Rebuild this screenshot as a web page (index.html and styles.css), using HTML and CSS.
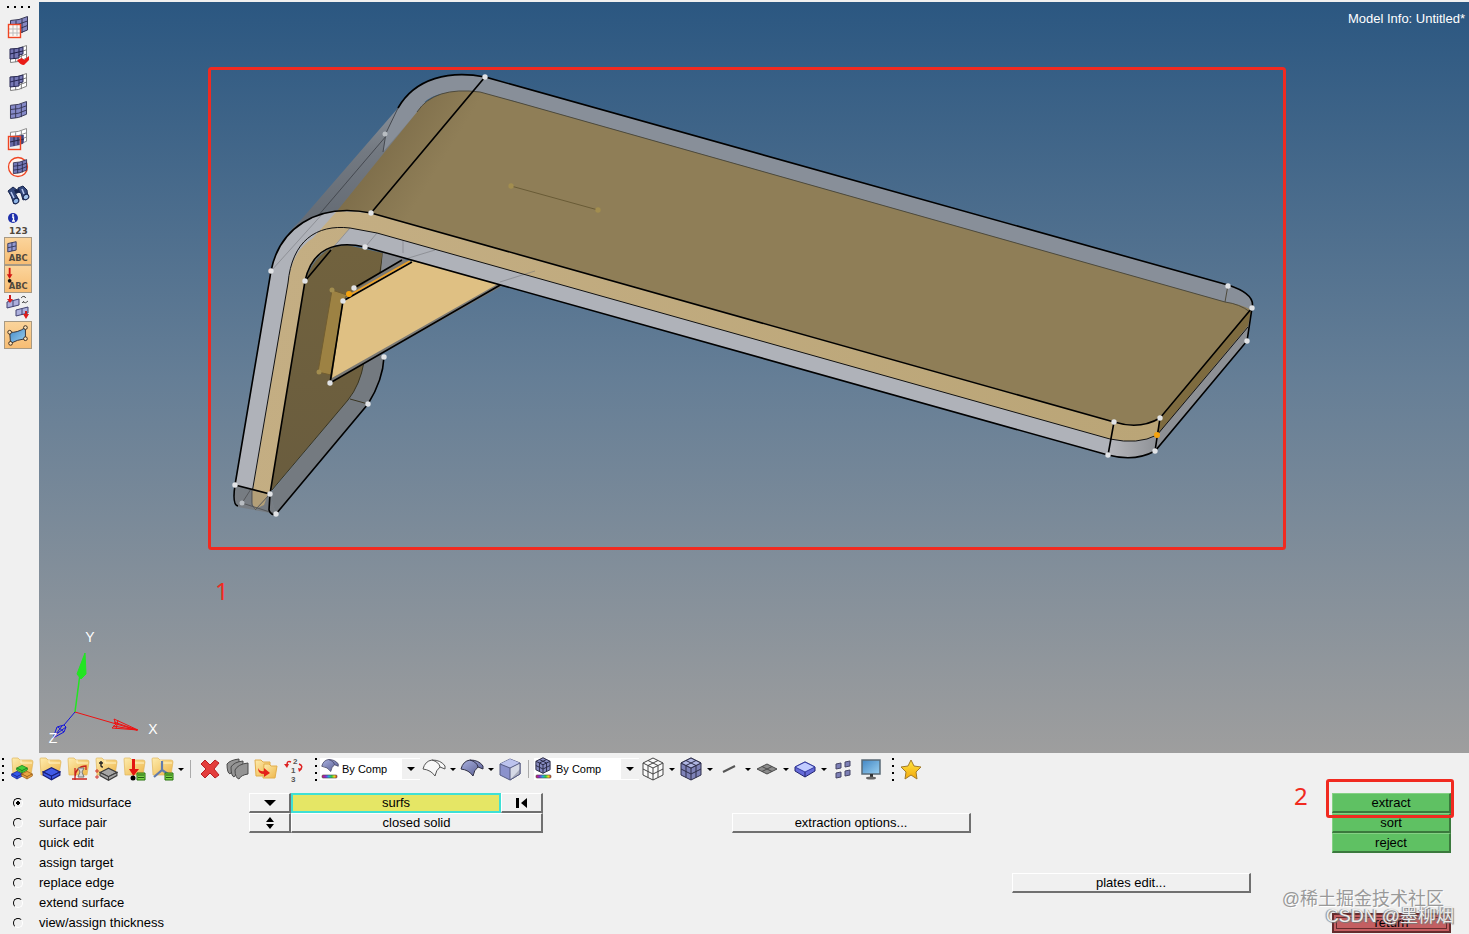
FILE: index.html
```html
<!DOCTYPE html>
<html lang="en">
<head>
<meta charset="utf-8">
<title>Model Info: Untitled*</title>
<link rel="stylesheet" href="styles.css">
</head>
<body>
<svg class="defs" aria-hidden="true">
  <defs>
    <linearGradient id="fold" x1="0" y1="0" x2="1" y2="1"><stop offset="0" stop-color="#fdecae"/><stop offset="1" stop-color="#eeb548"/></linearGradient>
    <linearGradient id="sheen" x1="0" y1="0" x2="1" y2="1"><stop offset="0" stop-color="#aab2e0"/><stop offset="1" stop-color="#55598f"/></linearGradient>
    <linearGradient id="screen" x1="0" y1="0" x2="1" y2="1"><stop offset="0" stop-color="#4287c4"/><stop offset="1" stop-color="#9bd0f0"/></linearGradient>
    <linearGradient id="gold" x1="0" y1="0" x2="0" y2="1"><stop offset="0" stop-color="#ffe640"/><stop offset="1" stop-color="#f3a80c"/></linearGradient>
    <linearGradient id="spectrum"><stop offset="0" stop-color="#d02060"/><stop offset=".25" stop-color="#8030e0"/><stop offset=".45" stop-color="#20b0e0"/><stop offset=".65" stop-color="#30d040"/><stop offset=".82" stop-color="#f0e020"/><stop offset="1" stop-color="#e03020"/></linearGradient>
    <symbol id="mesh" viewBox="0 0 18 20" overflow="visible"><path d="M.5 4.500Q9 4.500 17.500.5V14Q9 18.500.5 18.500Z"/><path fill="none" d="M6 4.500V18M12 3V17M.5 9Q9 9 17.500 5M.5 14Q9 14 17.500 9.500"/></symbol>
    <symbol id="folder" viewBox="0 0 28 28"><path d="M4 4Q4 3 5 3H10L12 5H23Q25 5 25 7L23 20H5Z" fill="url(#fold)" stroke="#dfb65c" stroke-width=".7"/><path d="M13 5V8H24" fill="none" stroke="#fff3c6"/></symbol>
    <symbol id="block" viewBox="0 0 18 13"><path d="M1 5L9 1L17 5L9 9Z"/><path d="M1 5V8L9 12.500L17 8V5L9 9ZM9 9V12.500"/></symbol>
    <symbol id="cube" viewBox="0 0 24 24"><path d="M2 6L12 1L22 6V18L12 23L2 18Z"/><path fill="none" d="M2 6L12 11L22 6M12 11V23"/></symbol>
    <symbol id="cubelines" viewBox="0 0 24 24"><path fill="none" d="M7 3.500L17 8.500V20.500M17 3.500L7 8.500V20.500M2 12L12 17L22 12"/></symbol>
    <symbol id="shell" viewBox="0 0 24 18"><path d="M1 10Q3 2 10 1Q19 1 23 7V10L18 8Q14 11 13 17Q9 11 1 10Z"/><path fill="none" d="M10 1Q17 3 18 8"/></symbol>
    <symbol id="drop" viewBox="0 0 10 28"><path d="M2 13H8L5 16Z"/></symbol>
  </defs>
</svg>
<div class="app">
  <main class="workspace">
    <nav class="sidebar" aria-label="Display tools">
      <span class="dots dots-row"></span>
      <button class="tool" aria-label="Mask"><svg viewBox="0 0 28 28"><use href="#mesh" x="6" y="3" width="18" height="20" fill="#8586c0" stroke="#343452"/><rect x="5" y="12" width="11" height="12" fill="#fff8f2"/><path d="M9 12V23M13 12V23M5 16H16M5 20H16" stroke="#bbb"/><rect x="4.500" y="11.500" width="12" height="13" fill="none" stroke="#ef4523" stroke-width="1.400"/></svg></button>
      <button class="tool" aria-label="Reverse"><svg viewBox="0 0 28 28"><use href="#mesh" x="6" y="4" width="17" height="19" fill="#fff" stroke="#777"/><path d="M6 8Q14 8 19 6V13L15 14V17L6 18Z" fill="#7474b2" stroke="#292955"/><path d="M10 8V18M15 7V15M6 13L19 10" stroke="#20204a"/><path d="M13 19L18 17L20 19L25 15V19L20 24Q16 24 13 19Z" fill="#e91c17"/></svg></button>
      <button class="tool" aria-label="Unmask adjacent"><svg viewBox="0 0 28 28"><use href="#mesh" x="6" y="4" width="17" height="19" fill="#fff" stroke="#777"/><path d="M6 8Q14 8 19 6V13L15 14V17L6 18Z" fill="#7779b6" stroke="#292955"/><path d="M10 8V18M15 7V15M6 13L19 10" stroke="#272752"/></svg></button>
      <button class="tool" aria-label="Unmask all"><svg viewBox="0 0 28 28"><use href="#mesh" x="6" y="4" width="17" height="19" fill="#8589c8" stroke="#363654"/></svg></button>
      <button class="tool" aria-label="Unmask shown"><svg viewBox="0 0 28 28"><use href="#mesh" x="6" y="3" width="17" height="19" fill="#fff" stroke="#888"/><path d="M6 12L16 10L20 10V18L16 20L6 22Z" fill="#6568a5"/><path d="M10 12V21M14 11V20M18 10V19M6 17L20 14" stroke="#242445"/><rect x="4.500" y="11.500" width="12" height="13" fill="none" stroke="#ef4523" stroke-width="1.400"/></svg></button>
      <button class="tool" aria-label="Spherical clipping"><svg viewBox="0 0 28 28"><circle cx="14" cy="14" r="9.500" fill="#fff4ee" stroke="#ef4523" stroke-width="1.300"/><use href="#mesh" x="9" y="6" width="14" height="16" fill="#7378b7" stroke="#242445"/></svg></button>
      <button class="tool" aria-label="Find"><svg viewBox="0 0 28 28"><path d="M4 10L9 6L13 9L11 12L15 19L10 23L7 15ZM14 7L19 5L23 9L24 17L19 19L17 12L14 11Z" fill="#34487c" stroke="#17244d"/><path d="M10 9L15 8L16 11L12 13Z" fill="#17244d"/><ellipse cx="12" cy="20" rx="3" ry="2.500" transform="rotate(-40 12 20)" fill="#8fb6e7" stroke="#17244d"/><ellipse cx="22" cy="16" rx="3" ry="2.500" transform="rotate(-40 22 16)" fill="#a4c4ed" stroke="#17244d"/><path d="M7 11L10 17M18 8L20 13" stroke="#b9c9f0" stroke-width="1.500"/></svg></button>
      <button class="tool" aria-label="Numbers 123"><svg viewBox="0 0 28 28"><circle cx="9" cy="9" r="5" fill="#1e2fab"/><path d="M8 8H9.500V12M8 12H11" fill="none" stroke="#fff" stroke-width="1.400"/><circle cx="9" cy="6" r="1" fill="#fff"/><text x="5" y="25" class="glyph">123</text></svg></button>
      <button class="tool active" aria-label="Element labels"><svg viewBox="0 0 28 28"><path d="M3 6L12 4V13L3 15ZM7.500 5V14M3 10.500L12 8.500" fill="#9299d2" stroke="#34385c"/><text x="4" y="25" class="glyph">ABC</text></svg></button>
      <button class="tool active" aria-label="Load labels"><svg viewBox="0 0 28 28"><path d="M5 2V11" stroke="#d31612" stroke-width="2"/><path d="M2 9H8L5 14Z" fill="#d31612"/><circle cx="5" cy="16" r="2" fill="#111"/><text x="4" y="25" class="glyph">ABC</text></svg></button>
      <button class="tool" aria-label="Load handles"><svg viewBox="0 0 28 28"><path d="M3 9L15 6V12L3 15ZM9 8V14M12 17L24 14V20L12 23ZM18 16V22" fill="#adb0dd" stroke="#434371"/><path d="M6 2V7M22 18V23" stroke="#cd1b1b" stroke-width="2"/><path d="M3 6H9L6 10ZM19 21H25L22 26Z" fill="#df1c1c"/><path d="M17 5Q19 2 21 4M20 3L22 5M24 8Q22 11 19 9M20 8L18 10" fill="none" stroke="#555"/></svg></button>
      <button class="tool active" aria-label="Shape handles"><svg viewBox="0 0 28 28"><path d="M5 11Q13 12 22 6V18Q13 19 6 23Z" fill="url(#screen)" stroke="#2d2b35"/><g fill="#ffe5bb" stroke="#34251a"><circle cx="5" cy="11" r="2"/><circle cx="22" cy="6" r="2"/><circle cx="22" cy="18" r="2"/><circle cx="6" cy="23" r="2"/></g></svg></button>
    </nav>
    <section class="viewport" aria-label="Model view">
      <svg class="scene" viewBox="39 2 1430 751" preserveAspectRatio="xMinYMin meet">
        <defs>
          <linearGradient id="wall" gradientUnits="userSpaceOnUse" x1="0" y1="100" x2="0" y2="270"><stop offset="0" stop-color="#8c939d"/><stop offset=".3" stop-color="#737981"/><stop offset=".7" stop-color="#656c75"/><stop offset="1" stop-color="#8f98a5"/></linearGradient>
          <linearGradient id="plate" gradientUnits="userSpaceOnUse" x1="360" y1="150" x2="425" y2="190"><stop offset="0" stop-color="#7b6b48"/><stop offset="1" stop-color="#8f7e57"/></linearGradient>
          <linearGradient id="edge" gradientUnits="userSpaceOnUse" x1="300" y1="210" x2="1150" y2="450"><stop offset="0" stop-color="#c4ae83"/><stop offset="1" stop-color="#baa577"/></linearGradient>
          <linearGradient id="leg" gradientUnits="userSpaceOnUse" x1="0" y1="250" x2="0" y2="510"><stop offset="0" stop-color="#71623e"/><stop offset="1" stop-color="#695c3e"/></linearGradient>
          <linearGradient id="trim" gradientUnits="userSpaceOnUse" x1="1110" y1="0" x2="1158" y2="0"><stop offset="0" stop-color="#b5b6bb"/><stop offset="1" stop-color="#8e9196"/></linearGradient>
        </defs>
        <!-- far walls -->
        <path fill="url(#wall)" d="M271 271Q278 240 300 221L398 108L480 90V112L340 230Z"/>
        <path fill="#888f99" d="M386 133L398 108C415 78 450 70 485 77L1228 285Q1256 294 1253 308L1250 312L1225 302L520 103Q433 77 417 112L383 152Z"/>
        <path fill="#747a80" d="M270 494L348 400Q363 378 363 345L384 357Q383 380 368 404L276 514Z"/>
        <path class="thin" stroke="#454950" d="M387 135L271 271M386 133L383 152M398 108L386 133"/>
        <!-- inner leg and rib -->
        <path fill="url(#leg)" d="M305 281Q318 245 347 245L383 253L380 300L364 358Q363 380 348 400L270 492Z"/>
        <path class="thin" stroke="#393420" d="M364 362Q360 385 348 400L272 490M383 253L380 272M350 399L368 404"/>
        <path fill="#858990" d="M383 250L407 258L381 272Z"/>
        <path fill="#7b7a76" d="M349 294L402 259L420 264L343 301ZM332 378L500 281L504 285L330 383Z"/>
        <path fill="#dfc083" d="M343 301L412 261L503 281L332 378Z"/>
        <path fill="#9d8243" stroke="#725e31" d="M332 290L347 295L343 301L331 375L318 372Z"/>
        <path class="line" d="M305 281L331 250M354 288L402 260M343 301L412 262M343 301L330 383L502 284"/>
        <path stroke="#efa225" fill="none" stroke-width="1.500" d="M348 296L410 261"/>
        <!-- bent mid surface -->
        <path fill="url(#plate)" d="M337 211L417 112Q434 86 480 92L520 103L1225 302Q1240 304 1252 310L1160 418Q1140 430 1114 422L371 213Z"/>
        <path class="thin" stroke="#4e4a3c" d="M417 112Q434 86 480 92L520 103L1225 302Q1240 304 1250 312M1228 285L1225 302"/>
        <!-- front edge -->
        <path fill="#afb2b9" d="M235 485L271 271C279 230 310 211 347 211L371 213L1114 422Q1140 430 1160 418L1155 451Q1135 462 1108 455L365 247C335 240 312 249 305 281L270 494Z"/>
        <path fill="url(#edge)" d="M337 211L371 213L1114 422Q1140 430 1160 418L1157 435Q1138 445 1110 439L377 233L350 228L333 247Q312 255 305 281L270 494L253 490L288 283C291 260 299 247 313 238Z"/>
        <path fill="url(#trim)" d="M1113 439Q1138 445 1157 435L1155 451Q1135 462 1109 455Z"/>
        <path class="thin" stroke="#74767b" opacity=".55" d="M271 271L325 211M350 228L331 250M377 233L366 246M403 240V253M402 260L435 250M500 282L535 271"/>
        <!-- right end -->
        <path fill="#8d9095" d="M1252 308L1247 341L1155 451L1158 430Z"/>
        <path fill="#7e6b3f" d="M1252 308L1248 326L1157 435L1160 418Z"/>
        <path class="thin" d="M252 503V493L288 283C292 241 316 224 350 228L377 233L1110 439Q1138 445 1157 435L1248 327"/>
        <!-- foot -->
        <path fill="#777a7e" opacity=".85" d="M235 485L270 494L276 514L238 507Q233 502 235 485Z"/>
        <path fill="#b39f78" d="M252 490L268 494L264 505L255 509L252 503Z"/>
        <path class="thin" stroke="#55575a" d="M242 503L276 514M251 489L242 503M270 494L256 509M252 490V505L256 510"/>
        <path class="line" d="M235 485Q232 505 238 506M270 494L269 510Q271 516 276 514M235 485L270 494L305 281C312 249 335 240 365 247L1108 455Q1135 462 1155 451L1247 341L1252 308L1160 418Q1140 430 1114 422L371 213C315 202 279 230 271 271L235 485M371 213L485 77L1228 285Q1256 294 1252 308M485 77C450 70 415 78 398 108M1114 422L1108 455M1160 418L1155 451M276 514L368 404Q383 380 384 357"/>
        <path class="thin" stroke="#695b36" d="M511 186L598 210"/>
        <g fill="#a28d4f"><circle cx="511" cy="186" r="2.700"/><circle cx="598" cy="210" r="2.700"/><circle cx="332" cy="290" r="2.500"/><circle cx="319" cy="372" r="2.500"/></g>
        <g fill="#f4a20e"><circle cx="349" cy="294" r="3"/><circle cx="1157" cy="435" r="3"/></g>
        <g fill="#e1e3e6"><circle cx="485" cy="77" r="2.700"/><circle cx="385" cy="134" r="2.500" fill="#b8bdc2"/><circle cx="371" cy="213" r="2.700"/><circle cx="271" cy="271" r="2.700"/><circle cx="305" cy="281" r="2.700"/><circle cx="365" cy="247" r="2.700"/><circle cx="354" cy="288" r="2.700"/><circle cx="343" cy="301" r="2.700"/><circle cx="330" cy="383" r="2.700"/><circle cx="384" cy="357" r="2.700"/><circle cx="368" cy="404" r="2.700"/><circle cx="235" cy="485" r="2.700"/><circle cx="270" cy="494" r="2.700"/><circle cx="242" cy="503" r="2.500" fill="#b8bdc2"/><circle cx="276" cy="514" r="2.700"/><circle cx="1228" cy="286" r="2.700"/><circle cx="1252" cy="308" r="2.700"/><circle cx="1247" cy="341" r="2.700"/><circle cx="1160" cy="418" r="2.700"/><circle cx="1114" cy="422" r="2.700"/><circle cx="1108" cy="455" r="2.700"/><circle cx="1155" cy="451" r="2.700"/></g>
        <!-- axes -->
        <path stroke="#22e522" stroke-width="1.500" d="M75 712L80 674"/>
        <path stroke="#22e522" fill="#22e522" d="M85 653L77 674L81 679L86 674Z"/>
        <path stroke="#f01010" fill="none" d="M75 712L137 730M138 730L114 719L116 724L112 728ZM114 722L137 730M113 726L137 730M118 720L116 729"/>
        <path stroke="#1414d8" fill="none" d="M75 712L64 725M64 725L57 727L53 738L64 732L66 727ZM53 738L62 726M58 727L64 732M55 735L66 727"/>
        <g class="axis"><text x="90" y="642">Y</text><text x="153" y="734">X</text><text x="53" y="743">Z</text></g>
        <!-- callout -->
        <rect class="callout" x="209.500" y="68.500" width="1075" height="480" rx="2"/>
        <text class="callout-number" x="215" y="600">1</text>
      </svg>
      <p class="model-info">Model Info: Untitled*</p>
    </section>
  </main>

  <div class="toolbar" role="toolbar" aria-label="Collectors and display">
    <span class="dots dots-start"></span>
    <button class="tool" aria-label="Assemblies"><svg viewBox="0 0 28 28"><use href="#folder" width="28" height="28"/><use href="#block" x="8" y="9" width="12" height="10" fill="#42ce37" stroke="#14751c"/><use href="#block" x="3" y="15" width="12" height="10" fill="#3458e8" stroke="#10208c"/><use href="#block" x="13" y="15" width="12" height="10" fill="#e9a542" stroke="#955713"/></svg></button>
    <button class="tool" aria-label="Components"><svg viewBox="0 0 28 28"><use href="#folder" width="28" height="28"/><use href="#block" x="6" y="11" width="19" height="15" fill="#405be8" stroke="#171e79"/></svg></button>
    <button class="tool" aria-label="Materials"><svg viewBox="0 0 28 28"><use href="#folder" width="28" height="28"/><path d="M11 25V13M8 24H23M11 22Q12 11 22 11V15" fill="none" stroke="#c9231d" stroke-width="1.300"/><path d="M14 13H20L18 17L20 22H14L16 17Z" fill="#d6d6d6" stroke="#777"/></svg></button>
    <button class="tool" aria-label="Properties"><svg viewBox="0 0 28 28"><use href="#folder" width="28" height="28"/><path d="M9 6V11Q9 12 11 12M7 8H11" fill="none" stroke="#222" stroke-width="1.400"/><path d="M5 14V18M3 16H7M5 20V24M3 22H7" stroke="#d63931"/><use href="#block" x="7" y="12" width="19" height="14" fill="#a5a5a5" stroke="#3c3c3c"/></svg></button>
    <button class="tool" aria-label="Load collectors"><svg viewBox="0 0 28 28"><use href="#folder" width="28" height="28"/><path d="M12 4H15V14H19L13.500 21L9 14H12Z" fill="#e31510"/><circle cx="13" cy="23" r="2.500"/><path d="M17 18H25V25H17Z" fill="#7bd447" stroke="#27700e"/><path d="M18 20H24M18 22.500H24" stroke="#245d13"/></svg></button>
    <button class="tool" aria-label="System collectors"><svg viewBox="0 0 28 28"><use href="#folder" width="28" height="28"/><path d="M14 6V15L6 22M14 15L20 19" fill="none" stroke="#627bac" stroke-width="2.200"/><path d="M17 18H25V25H17Z" fill="#7bd447" stroke="#27700e"/><path d="M18 20H24M18 22.500H24" stroke="#245d13"/></svg></button>
    <button class="drop" aria-label="More collectors"><svg viewBox="0 0 10 28"><use href="#drop" width="10" height="28"/></svg></button>
    <span class="separator"></span>
    <button class="tool" aria-label="Delete"><svg viewBox="0 0 28 28"><path d="M5 9L9 5L14 10L19 5L23 8L18 14L23 20L19 23L14 18L9 23L5 19L10 14Z" fill="#e33d3c" stroke="#b91e22" stroke-linejoin="round"/></svg></button>
    <button class="tool" aria-label="Card edit"><svg viewBox="0 0 28 28"><g fill="#949494" stroke="#4a4a4a"><path d="M3 9Q6 5 15 4V14Q8 15 6 19Q3 18 3 9Z"/><path d="M7 12Q10 7 19 6V17Q12 18 10 22Q7 21 7 12Z"/><path d="M11 15Q14 9 24 8V19Q17 20 15 24Q11 23 11 15Z"/></g></svg></button>
    <button class="tool" aria-label="Organize"><svg viewBox="0 0 28 28"><path d="M3 5H9L11 7H18V21H4Z" fill="url(#fold)" stroke="#e2ae4c"/><path d="M12 9H17L19 11H25L23 23H11Z" fill="url(#fold)" stroke="#e2ae4c"/><path d="M6 13Q8 17 12 16V13L18 18L12 22V19Q6 19 6 13Z" fill="#e42118"/></svg></button>
    <button class="tool" aria-label="Renumber"><svg viewBox="0 0 28 28"><g class="digits"><text x="13" y="9">2</text><text x="11" y="18">1</text><text x="11" y="27">3</text></g><path d="M11 7Q7 5 7 10M19 9Q24 11 20 15" fill="none" stroke="#d22" stroke-width="1.500"/><path d="M4 9H9L7 13ZM18 13L22 14L19 17Z" fill="#d22"/></svg></button>
    <span class="dots"></span>
    <label class="combo"><svg viewBox="0 0 20 28" aria-hidden="true"><use href="#shell" x="1" y="3" width="18" height="15" fill="url(#sheen)" stroke="#40405f"/><rect x="2" y="20" width="15" height="3" rx="1" fill="url(#spectrum)" stroke="#444" stroke-width=".6"/></svg><select aria-label="Geometry colour"><option>By Comp</option></select><svg class="arrow" viewBox="0 0 18 20"><path d="M5 8H13L9 12Z"/></svg></label>
    <button class="tool" aria-label="Wireframe geometry"><svg viewBox="0 0 28 28"><use href="#shell" x="2" y="4" width="24" height="18" fill="#f8f8f8" stroke="#555"/></svg></button>
    <button class="drop" aria-label="Wireframe options"><svg viewBox="0 0 10 28"><use href="#drop" width="10" height="28"/></svg></button>
    <button class="tool" aria-label="Shaded geometry"><svg viewBox="0 0 28 28"><use href="#shell" x="2" y="4" width="24" height="18" fill="url(#sheen)" stroke="#303047"/></svg></button>
    <button class="drop" aria-label="Shading options"><svg viewBox="0 0 10 28"><use href="#drop" width="10" height="28"/></svg></button>
    <button class="tool" aria-label="Transparency"><svg viewBox="0 0 28 28"><path d="M4 9L14 4L24 8V19L14 25L4 20Z" fill="#8b92cc" stroke="#555b82"/><path d="M4 9L14 4L24 8L14 13Z" fill="#bcc3ee"/><path d="M14 13L24 8V19L14 25Z" fill="#d5d9e6"/><path d="M14 25L24 14V19Z" fill="#a9adbd"/><path d="M4 9L14 13L24 8M14 13V25M24 8V19L14 25" fill="none" stroke="#555b82"/></svg></button>
    <span class="separator"></span>
    <label class="combo combo-wide"><svg viewBox="0 0 20 28" aria-hidden="true"><g stroke="#2d2d49" stroke-width="1.400"><use href="#cube" x="0" y="2" width="18" height="17" fill="#8589be"/><use href="#cubelines" x="0" y="2" width="18" height="17"/></g><rect x="2" y="20" width="15" height="3" rx="1" fill="url(#spectrum)" stroke="#444" stroke-width=".6"/></svg><select aria-label="Element colour"><option>By Comp</option></select><svg class="arrow" viewBox="0 0 18 20"><path d="M5 8H13L9 12Z"/></svg></label>
    <button class="tool" aria-label="Wireframe elements"><svg viewBox="0 0 28 28"><g stroke="#444"><use href="#cube" x="2" y="2" width="24" height="24" fill="#fafafa"/><use href="#cubelines" x="2" y="2" width="24" height="24"/></g></svg></button>
    <button class="drop" aria-label="Element wireframe options"><svg viewBox="0 0 10 28"><use href="#drop" width="10" height="28"/></svg></button>
    <button class="tool" aria-label="Shaded elements"><svg viewBox="0 0 28 28"><g stroke="#2d2d49"><use href="#cube" x="2" y="2" width="24" height="24" fill="#7e82b8"/><path d="M4 8L14 3L24 8L14 13Z" fill="#afb5e2"/><use href="#cubelines" x="2" y="2" width="24" height="24"/></g></svg></button>
    <button class="drop" aria-label="Element shading options"><svg viewBox="0 0 10 28"><use href="#drop" width="10" height="28"/></svg></button>
    <button class="tool" aria-label="1D elements"><svg viewBox="0 0 28 28"><path d="M8 17L20 11" stroke="#555" stroke-width="2"/></svg></button>
    <button class="drop" aria-label="1D options"><svg viewBox="0 0 10 28"><use href="#drop" width="10" height="28"/></svg></button>
    <button class="tool" aria-label="2D elements"><svg viewBox="0 0 28 28"><path d="M4 14L14 9L24 14L14 19ZM9 11.500L19 16.500M19 11.500L9 16.500" fill="#8b8b8b" stroke="#494949"/></svg></button>
    <button class="drop" aria-label="2D options"><svg viewBox="0 0 10 28"><use href="#drop" width="10" height="28"/></svg></button>
    <button class="tool" aria-label="3D elements"><svg viewBox="0 0 28 28"><path d="M4 12L14 7L24 12V16L14 22L4 16Z" fill="#666bd8" stroke="#22246e"/><path d="M4 12L14 7L24 12L14 17Z" fill="#c2ccff" stroke="#3338a3"/><path d="M14 17V22" stroke="#22246e"/></svg></button>
    <button class="drop" aria-label="3D options"><svg viewBox="0 0 10 28"><use href="#drop" width="10" height="28"/></svg></button>
    <button class="tool" aria-label="Shrink"><svg viewBox="0 0 28 28"><path d="M7 9L12 8V13L7 14ZM16 7L21 6V11L16 12ZM7 18L12 17V22L7 23ZM16 16L21 15V20L16 21Z" fill="#7c7fb5" stroke="#474766"/></svg></button>
    <button class="tool" aria-label="Visual options"><svg viewBox="0 0 28 28"><rect x="5" y="5" width="18" height="14" fill="url(#screen)" stroke="#596a76" stroke-width="1.500"/><path d="M13 19H16V22H13Z" fill="#333"/><ellipse cx="14" cy="23" rx="5" ry="1.500" fill="#666"/></svg></button>
    <span class="dots"></span>
    <button class="tool" aria-label="Favorites"><svg viewBox="0 0 28 28"><path d="M14 5L17 11L24 12L19 17L20 24L14 20L8 24L9 17L4 12L11 11Z" fill="url(#gold)" stroke="#a27b2a"/></svg></button>
  </div>

  <form class="panel">
    <fieldset class="modes" aria-label="Mode">
      <label><input type="radio" name="mode" checked>auto midsurface</label>
      <label><input type="radio" name="mode">surface pair</label>
      <label><input type="radio" name="mode">quick edit</label>
      <label><input type="radio" name="mode">assign target</label>
      <label><input type="radio" name="mode">replace edge</label>
      <label><input type="radio" name="mode">extend surface</label>
      <label><input type="radio" name="mode">view/assign thickness</label>
    </fieldset>
    <div class="collector">
      <button type="button" class="key" aria-label="Entity type"><svg viewBox="0 0 12 12"><path d="M0 3H12L6 9Z"/></svg></button>
      <button type="button" class="key picked">surfs</button>
      <button type="button" class="key" aria-label="Reset"><svg viewBox="0 0 12 12"><path d="M0 1H3V11H0ZM11 1V11L5 6Z"/></svg></button>
      <button type="button" class="key" aria-label="Toggle solid type"><svg viewBox="0 0 12 12"><path d="M2 5L6 0L10 5ZM2 7H10L6 12Z"/></svg></button>
      <button type="button" class="key solid">closed solid</button>
    </div>
    <button type="button" class="key options">extraction options...</button>
    <button type="button" class="key plates">plates edit...</button>
    <div class="actions">
      <button type="button" class="key go">extract</button>
      <button type="button" class="key go">sort</button>
      <button type="button" class="key go">reject</button>
      <span class="step-box"></span>
      <span class="step-number">2</span>
    </div>
    <button type="button" class="key return">return</button>
    <span class="mark mark-community">@稀土掘金技术社区</span>
    <span class="mark mark-author">CSDN @墨柳烟</span>
  </form>
</div>
</body>
</html>
```

FILE: styles.css
```css
* { box-sizing: border-box; }
body {
  margin: 0;
  background: #f0f0f0;
  color: #000;
  font: 13px/20px "Liberation Sans", "Noto Sans CJK SC", sans-serif;
}
button { margin: 0; padding: 0; border: 0; background: none; font: inherit; color: inherit; }
svg { display: block; }
.defs { position: absolute; width: 0; height: 0; }
.app { display: flex; flex-direction: column; min-height: 100vh; }

.workspace { display: flex; flex: 1; min-height: 400px; padding-top: 2px; }
.sidebar { display: flex; flex-direction: column; flex: 0 0 39px; padding-left: 4px; }
.tool { width: 28px; height: 28px; flex: none; }
.tool svg { width: 28px; height: 28px; }
.sidebar .active svg { background: linear-gradient(#fbd49b, #f7bd73); border: 1px solid #a89a84; }
.glyph { font: bold 9px "DejaVu Sans", sans-serif; fill: #50483c; }

.dots { flex: none; width: 12px; height: 24px; background: repeating-linear-gradient(#000 0 2px, transparent 2px 7px) 7px 1px / 2px 100% no-repeat; }
.dots-start { width: 8px; background-position: 2px 1px; }
.dots-row { width: 28px; height: 11px; background: repeating-linear-gradient(90deg, #000 0 2px, transparent 2px 7px) 3px 4px / 23px 2px no-repeat; }

.viewport { position: relative; flex: 1; min-width: 0; overflow: hidden; background: linear-gradient(#2b5781, #657e96 50%, #9e9e9e); }
.scene { position: absolute; inset: 0; width: 100%; height: 100%; }
.line { fill: none; stroke: #000; stroke-width: 1.6; }
.thin { fill: none; stroke-width: 1; }
.thin:not([stroke]) { stroke: #111; }
.axis { font: 14px "Liberation Sans", sans-serif; fill: #fff; text-anchor: middle; }
.callout { fill: none; stroke: #f12a20; stroke-width: 3; }
.callout-number { font: 24px "Noto Sans", sans-serif; fill: #f12a20; }
.model-info { position: absolute; top: 7px; right: 4px; margin: 0; color: #fff; }

.toolbar { display: flex; align-items: center; height: 32px; }
.drop { flex: none; width: 10px; height: 28px; }
.drop svg { width: 10px; height: 28px; }
.separator { flex: none; width: 10px; height: 18px; background: linear-gradient(#aaa, #aaa) 4px 0 / 1px 100% no-repeat; }
.combo { display: flex; align-items: center; flex: none; width: 100px; height: 22px; background: #fff; }
.combo-wide { width: 105px; }
.combo svg { flex: none; width: 20px; height: 28px; }
.combo .arrow { width: 18px; height: 20px; background: #f0f0f0; pointer-events: none; }
.combo select { flex: 1; min-width: 0; height: 20px; padding: 0 0 0 2px; border: 0; background: none; appearance: none; font: 11px/20px "Liberation Sans", sans-serif; color: #000; }
.digits { font: bold 8px "Liberation Sans", sans-serif; fill: #555; }

.panel {
  position: relative;
  display: grid;
  grid-template-columns: 249fr 294fr 189fr 239fr 41fr 239fr 81fr 119fr 18fr;
  grid-template-rows: repeat(7, 20px);
  padding: 8px 0 1px;
}
.modes { grid-area: 1 / 1 / 8 / 2; min-width: 0; margin: 0; padding: 0; border: 0; }
.modes label { display: flex; align-items: center; gap: 16px; height: 20px; padding-left: 13px; white-space: nowrap; }
.modes input { appearance: none; width: 10px; height: 10px; margin: 0; border: 1px solid; border-color: #000 #fff #fff #000; border-radius: 50%; }
.modes input:checked { background: radial-gradient(#000 0 2px, transparent 2px); }

.key {
  display: flex;
  align-items: center;
  justify-content: center;
  min-width: 0;
  height: 20px;
  border: solid;
  border-width: 1px 2px 2px 1px;
  border-color: #fff #707070 #707070 #fff;
  white-space: nowrap;
}
.key svg { width: 12px; height: 12px; }
.collector { grid-area: 1 / 2 / 3 / 3; display: grid; grid-template-columns: 42fr 210fr 42fr; grid-template-rows: 20px 20px; }
.picked { border: 2px solid #3fe0d6; background: #e5e665; }
.solid { grid-column: 2 / 4; }
.options { grid-area: 2 / 4; }
.plates { grid-area: 5 / 6; }
.actions { grid-area: 1 / 8 / 4 / 9; position: relative; display: grid; }
.go { background: #5fc163; border-color: #84d184 #3b793d #3b793d #84d184; }
.return { grid-area: 7 / 8; background: #c45f62; border: 2px solid #652b2d; outline: 1px solid #652b2d; outline-offset: -5px; }
.step-box { position: absolute; inset: -14px -3px auto -6px; height: 39px; border: 3px solid #f12a20; border-radius: 3px; }
.step-number { position: absolute; top: -12px; left: -38px; font: 24px/30px "Noto Sans", sans-serif; color: #f12a20; }
.mark { position: absolute; font-size: 18px; line-height: 24px; white-space: nowrap; pointer-events: none; }
.mark-community { right: 25px; bottom: 23px; color: #999; text-shadow: 1px 1px #fff; }
.mark-author { right: 15px; bottom: 6px; color: #eee; text-shadow: 1px 1px 1px #777, -1px 0 1px #888; }
```
